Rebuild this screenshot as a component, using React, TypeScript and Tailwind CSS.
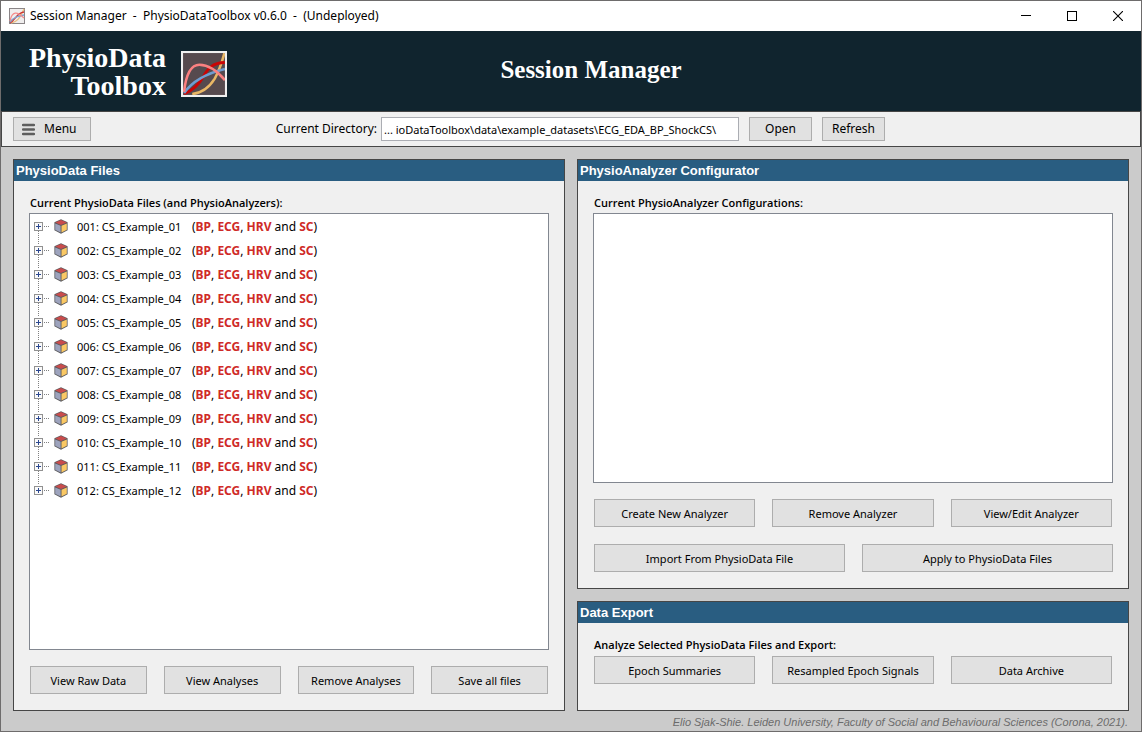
import type { ButtonHTMLAttributes, ReactNode } from "react";

const files = Array.from({ length: 12 }, (_, i) => {
  const n = String(i + 1).padStart(2, "0");
  return { id: `0${n}`, name: `CS_Example_${n}` };
});

function Curves({ className }: { className: string }) {
  return (
    <svg viewBox="0 0 45 45" className={className} aria-hidden="true">
      <rect x="1" y="1" width="43" height="43" fill="#564a4e" />
      <g fill="none" strokeWidth="2.5">
        <path d="M11 42C22 41 28 35 33 27C37 20 40 11 42.500 2" stroke="#e9b765" />
        <path d="M3 42C13 38 18 32 22 25C26 17 31 11.500 43 11.200" stroke="#c90505" strokeWidth="2.8" />
        <path d="M3 41C10 31 24 22 43 17.500" stroke="#6f9dd0" />
        <path d="M3 40C5 22 10 13.500 18 13.500C27 13.500 35 19 43 28.500" stroke="#fb8080" />
      </g>
      <rect x="1" y="1" width="43" height="43" fill="none" stroke="#f0f0f0" strokeWidth="2" />
    </svg>
  );
}

function MiniCurves() {
  return (
    <svg viewBox="0 0 16 16" className="size-4" aria-hidden="true">
      <rect x="0.5" y="0.5" width="15" height="15" fill="#f0eeee" stroke="#8a8587" />
      <g fill="none" strokeWidth="1.3">
        <path d="M2 15C9 14 11 9 15 1" stroke="#eabf80" />
        <path d="M1 15C6 13 7 5 15 4" stroke="#cc3434" />
        <path d="M1 14C5 9 9 8 15 7" stroke="#7ba4d4" />
        <path d="M1 13C3 3 8 3 15 10" stroke="#f58c8c" />
      </g>
    </svg>
  );
}

function Cube() {
  return (
    <svg viewBox="0 0 14 15" className="h-[15px] w-[14px] shrink-0" aria-hidden="true">
      <path d="M7 .3L13.600 3.300V11.200L7 14.700L.4 11.200V3.300Z" fill="#5a5a5e" />
      <path d="M7 1L12.800 3.500L7 6L1.200 3.500Z" fill="#c94c4c" />
      <path d="M1.200 4.500L6.600 6.800V13.500L1.200 10.700Z" fill="#9da3bd" />
      <path d="M12.800 4.500L7.500 6.800V13.500L12.800 10.700Z" fill="#fac864" />
    </svg>
  );
}

function TreeNode({ first, last }: { first: boolean; last: boolean }) {
  return (
    <svg viewBox="0 0 16 24" className="h-6 w-4 shrink-0" shapeRendering="crispEdges" aria-hidden="true">
      <g stroke="#808080" strokeDasharray="1 1">
        {!first && <path d="M4.500 0V6" />}
        {!last && <path d="M4.500 16V24" />}
        <path d="M10 11.500H15" />
      </g>
      <rect x="0.5" y="7.500" width="8" height="8" fill="#fafafa" stroke="#919191" />
      <path d="M2 11.500H7M4.500 9V14" stroke="#2b478f" />
    </svg>
  );
}

function Push({ className = "h-7 pt-0.5 text-[11px]", ...rest }: ButtonHTMLAttributes<HTMLButtonElement>) {
  return (
    <button
      type="button"
      className={`border border-[#adadad] bg-[#e1e1e1] text-center whitespace-nowrap ${className}`}
      {...rest}
    />
  );
}

function Panel({ title, className = "", children }: { title: string; className?: string; children: ReactNode }) {
  return (
    <section className={`flex flex-col border border-[#464646] bg-[#f0f0f0] ${className}`}>
      <h2 className="h-[21px] bg-[#295d81] pl-0.5 font-['Liberation_Sans',sans-serif] text-[13px] leading-[21px] font-bold text-white">
        {title}
      </h2>
      <div className="flex flex-1 flex-col px-[15px] pt-4 pb-4">{children}</div>
    </section>
  );
}

const caption = "h-4 pl-px font-['Open_Sans',sans-serif] text-[11px] leading-3 font-semibold";

export default function App() {
  return (
    <div className="flex min-h-screen flex-col border border-[#6e6c6c] bg-[#cbcbcb] font-['Noto_Sans',sans-serif] text-black">
      <div className="flex h-[30px] items-center bg-white">
        <div className="flex flex-1 items-center gap-[5px] pl-2">
          <MiniCurves />
          <span className="text-[12px] whitespace-pre">Session Manager  -  PhysioDataToolbox v0.6.0  -  (Undeployed)</span>
        </div>
        <button type="button" aria-label="Minimize" className="flex h-full w-[46px] items-center justify-center">
          <svg viewBox="0 0 10 10" className="size-2.5" shapeRendering="crispEdges"><path d="M0 4.500H10" stroke="#000" /></svg>
        </button>
        <button type="button" aria-label="Maximize" className="flex h-full w-[46px] items-center justify-center">
          <svg viewBox="0 0 10 10" className="size-2.5" shapeRendering="crispEdges"><path d="M.5 .5H9.500V9.500H.5Z" fill="none" stroke="#000" /></svg>
        </button>
        <button type="button" aria-label="Close" className="flex h-full w-[46px] items-center justify-center">
          <svg viewBox="0 0 10 10" className="size-2.5"><path d="M0 0L10 10M10 0L0 10" stroke="#000" strokeWidth="1.1" /></svg>
        </button>
      </div>

      <header className="grid h-20 grid-cols-[1fr_auto_1fr] items-center bg-[#10242e] font-['Liberation_Serif',serif] font-bold text-white">
        <div className="flex items-center gap-[15px] pt-1.5 pl-7">
          <div className="pb-1 text-right text-[28px] leading-7">
            PhysioData
            <br />
            Toolbox
          </div>
          <Curves className="size-[46px]" />
        </div>
        <h1 className="pb-0.5 pl-10 text-[25px] leading-8">Session Manager</h1>
      </header>

      <div className="flex h-9 items-center border border-[#464646] bg-[#f0f0f0] pr-[255px] pl-[11px] text-[12px]">
        <Push className="flex h-6 w-[78px] shrink-0 items-center gap-[9px] pl-2">
          <svg viewBox="0 0 13 13" className="size-[13px]" aria-hidden="true">
            <path d="M1 2H12M1 6.500H12M1 11H12" stroke="#5e5e5e" strokeWidth="2.400" strokeLinecap="round" />
          </svg>
          Menu
        </Push>
        <label htmlFor="directory" className="w-[290px] shrink-0 pr-1 text-right">Current Directory:</label>
        <input
          id="directory"
          type="text"
          readOnly
          value={"... ioDataToolbox\\data\\example_datasets\\ECG_EDA_BP_ShockCS\\"}
          className="h-6 min-w-0 flex-1 border border-[#abadb3] bg-white px-0.5 text-[11px]"
        />
        <Push className="ml-2.5 h-6 w-[63px] shrink-0">Open</Push>
        <Push className="ml-2.5 h-6 w-[63px] shrink-0">Refresh</Push>
      </div>

      <main className="grid flex-1 grid-cols-2 gap-3 px-3 pt-3">
        <Panel title="PhysioData Files">
          <h3 className={caption}>Current PhysioData Files (and PhysioAnalyzers):</h3>
          <ul className="flex-1 border border-[#828790] bg-white pt-px text-[12px]">
            {files.map((f, i) => (
              <li key={f.id} className="flex h-6 items-center pl-1">
                <TreeNode first={i === 0} last={i === files.length - 1} />
                <span className="flex pb-0.5 pl-1"><Cube /></span>
                <span className="box-content w-[115px] shrink-0 pl-[9px] text-[11px] whitespace-nowrap">{f.id}: {f.name}</span>
                <span className="whitespace-nowrap [&>b]:text-[#cf2a27]">
                  (<b>BP</b>, <b>ECG</b>, <b>HRV</b> and <b>SC</b>)
                </span>
              </li>
            ))}
          </ul>
          <div className="grid grid-cols-4 gap-[17px] px-px pt-4">
            <Push>View Raw Data</Push>
            <Push>View Analyses</Push>
            <Push>Remove Analyses</Push>
            <Push>Save all files</Push>
          </div>
        </Panel>

        <div className="flex flex-col gap-3">
          <Panel title="PhysioAnalyzer Configurator" className="flex-1">
            <h3 className={caption}>Current PhysioAnalyzer Configurations:</h3>
            <ul className="flex-1 border border-[#828790] bg-white" />
            <div className="grid grid-cols-3 gap-[17px] px-px pt-4">
              <Push>Create New Analyzer</Push>
              <Push>Remove Analyzer</Push>
              <Push>View/Edit Analyzer</Push>
            </div>
            <div className="grid grid-cols-2 gap-[17px] pt-[17px] pl-px">
              <Push>Import From PhysioData File</Push>
              <Push>Apply to PhysioData Files</Push>
            </div>
          </Panel>
          <Panel title="Data Export">
            <h3 className={caption}>Analyze Selected PhysioData Files and Export:</h3>
            <div className="grid grid-cols-3 gap-[17px] px-px pt-px pb-2.5">
              <Push>Epoch Summaries</Push>
              <Push>Resampled Epoch Signals</Push>
              <Push>Data Archive</Push>
            </div>
          </Panel>
        </div>
      </main>

      <footer className="h-5 pr-[13px] text-right font-['Liberation_Sans',sans-serif] text-[11px] leading-[22px] text-[#6b6b6b] italic">
        Elio Sjak-Shie. Leiden University, Faculty of Social and Behavioural Sciences (Corona, 2021).
      </footer>
    </div>
  );
}
